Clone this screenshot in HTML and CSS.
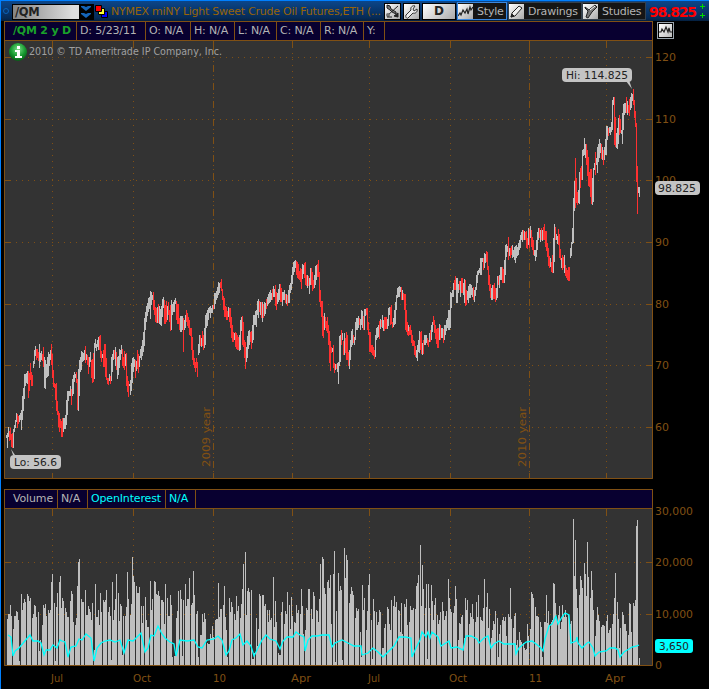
FILE: index.html
```html
<!DOCTYPE html>
<html lang="en">
<head>
<meta charset="utf-8">
<title>/QM chart</title>
<link rel="stylesheet" href="styles.css">
</head>
<body>
<main class="window">
  <header class="toolbar">
    <i class="dot"></i>
    <div class="symbol"><span>/QM</span>
      <svg class="arrows" width="14" height="14" viewBox="0 0 14 14"><path d="M2 1h3l2 1 2-1h3v1L7 6 2 2zM2 8h3l2 1 2-1h3v1l-5 4-5-4z" fill="#1464b8"/></svg>
    </div>
    <svg class="link" width="14" height="13" viewBox="0 0 14 13"><path d="M6.500 6.500h6v6h-6z" fill="#00f" stroke="#000"/><path d="M3.500 3.500h6v6h-6z" fill="#ff3" stroke="#000"/><path d="M.5 .5h6v6h-6z" fill="#f00" stroke="#000"/></svg>
    <span class="title">NYMEX miNY Light Sweet Crude Oil Futures,ETH (...</span>
    <span class="tool share"><svg width="15" height="15" viewBox="0 0 15 15"><path d="M2 1l3 1 1 3 5 3v2L7 8 5 6 2 4zM13 2L3 11" stroke="#222" fill="#777"/><circle cx="3" cy="11" r="2" fill="#777"/><path d="M9 12l4-3v4zM2 13h5" stroke="#222" fill="#222"/></svg></span>
    <span class="tool wrench"><svg width="15" height="15" viewBox="0 0 15 15"><path d="M2 11l5-5c-1-3 2-5 4-4L9 5l1 2 3-2c1 3-2 5-4 4l-5 5c-1 1-3-1-2-3z" fill="#eee" stroke="#333"/></svg></span>
    <span class="tool day">D</span>
    <span class="menu style"><svg width="15" height="15" viewBox="0 0 15 15"><path d="M0 12l2-3 1 2 2-5 2 3 2-4 1 5 2-7 1 3 2-3" stroke="#222" stroke-width="1.2" fill="none"/></svg><b>Style</b></span>
    <span class="menu draw"><svg width="15" height="15" viewBox="0 0 15 15"><path d="M2 13l1-4 7-7 3 2-7 8z" fill="#eee" stroke="#222"/><path d="M2 13l1-3 2 2z" stroke="#222" fill="#222"/></svg><b>Drawings</b></span>
    <span class="menu study"><svg width="15" height="15" viewBox="0 0 15 15"><path d="M2 3l4 3 6-5 2 2-5 5-4 6-2-1 2-6-3-3z" fill="#777" stroke="#222"/><path d="M7 6l5-4" stroke="#fff"/></svg><b>Studies</b></span>
    <strong class="last">98.825</strong>
    <span class="plus"><i></i><i></i></span>
  </header>
  <div class="status">
    <div class="cells">
      <span class="cell sym">/QM 2 y D</span><span class="cell c1">D: 5/23/11</span><span class="cell c2">O: N/A</span><span class="cell c3">H: N/A</span><span class="cell c4">L: N/A</span><span class="cell c5">C: N/A</span><span class="cell c6">R: N/A</span><span class="cell c7">Y:</span>
    </div>
    <span class="fit"><svg width="13" height="13" viewBox="0 0 13 13"><path d="M0 8h2l1-3 2 3 2-5 2 5 1-4 1 4h2" stroke="#222" stroke-width="1.2" fill="none"/></svg></span>
  </div>
  <svg class="plot" id="price" width="705" height="449" viewBox="4 41 705 449"></svg>
  <div class="studybar"><span class="cell v1">Volume</span><span class="cell v2">N/A</span><span class="cell v3">OpenInterest</span><span class="cell v4">N/A</span></div>
  <svg class="plot" id="volume" width="705" height="180" viewBox="4 509 705 180"></svg>
</main>
<script src="chart.js"></script>
</body>
</html>
```
FILE: styles.css
```css
* { box-sizing: border-box; }
body { margin: 0; background: #000; font-family: "DejaVu Sans", sans-serif; font-size: 11px; }
.window { width: 709px; height: 689px; overflow: hidden; background: #000; border-left: 1px solid #0080ff; padding-left: 3px; }
.toolbar { display: flex; align-items: center; height: 21px; margin-left: -3px; border-top: 1px solid #0080ff; background: linear-gradient(#0b468a, #062a55 85%, #04203f); white-space: nowrap; }
.dot { width: 6px; height: 6px; border: 1px solid #0b62b8; border-radius: 50%; margin: 0 3px 0 2px; flex: none; }
.symbol { display: flex; align-items: center; flex: none; width: 82px; height: 16px; margin-top: 1px; border: 1px solid #000; background: linear-gradient(90deg, #858585, #ddd 75%); color: #222; font-weight: bold; font-size: 11.5px; letter-spacing: -.4px; }
.symbol span { flex: 1; padding-left: 2px; }
.arrows { background: #000; }
.link { margin-left: 1px; flex: none; overflow: visible; }
.title { flex: none; width: 273px; margin-left: 2px; color: #986407; letter-spacing: -.25px; }
.tool { flex: none; height: 17px; border: 1px solid #000; background: linear-gradient(135deg, #fff, #aaa); }
.tool svg { display: block; }
.share, .wrench { width: 17px; }
.wrench { margin-left: 2px; }
.day { width: 34px; margin-left: 2px; text-align: center; color: #222; font-weight: bold; line-height: 15px; font-size: 12px; }
.menu { flex: none; display: flex; align-items: center; height: 18px; border: 1px solid #34404c; background: #151515; color: #b4b4b4; }
.menu svg { background: linear-gradient(135deg, #fff, #aaa); }
.menu b { font-weight: normal; margin-left: 4px; letter-spacing: -.2px; }
.style { width: 50px; margin-left: 1px; border-color: #3a87df; }
.draw { width: 74px; margin-left: 1px; }
.study { width: 64px; }
.last { color: #f00; margin-left: 3px; font-size: 14px; letter-spacing: -1.2px; width: 51px; margin-top: 1px; }
.plus { display: flex; flex-direction: column; gap: 4px; }
.plus i { width: 5px; height: 5px; background: linear-gradient(#0d0, #0d0) center/5px 1px no-repeat, linear-gradient(#0d0, #0d0) center/1px 5px no-repeat; }
.status { display: flex; height: 20px; }
.cells, .studybar { display: flex; width: 649px; height: 20px; border: 1px solid #805014; background: #080030; color: #b4b4b4; }
.cell { flex: none; border-right: 1px solid #805014; line-height: 17px; padding-left: 3px; letter-spacing: -.15px; white-space: nowrap; overflow: hidden; }
.sym { width: 72px; padding-left: 8px; color: #1aa32a; font-weight: bold; letter-spacing: -.2px; }
.c1 { width: 69px; }
.c2 { width: 45px; }
.c3 { width: 44px; }
.c4 { width: 42px; }
.c5 { width: 44px; }
.c6 { width: 43px; }
.c7 { width: 21px; }
.fit { width: 17px; height: 17px; margin: 1px 0 0 4px; padding: 1px; border: 1px solid #9aa4ac; background: #000; }
.fit svg { display: block; background: linear-gradient(135deg, #fff, #bbb); }
.plot { display: block; overflow: visible; }
.studybar { height: 20px; margin-top: -1px; position: relative; }
.v1 { width: 53px; padding-left: 8px; }
.v2 { width: 30px; }
.v3 { width: 78px; color: #0ff; }
.v4 { width: 30px; color: #0ff; }
.frame { fill: none; stroke: #805014; }
.grid { fill: none; stroke: #805014; stroke-dasharray: 1 5; }
.year { fill: none; stroke: #805014; stroke-dasharray: 7 3 1 3 1 3; }
.axis { fill: #805014; }
.tag { fill: #c4c4c4; }
.ink { fill: #222; }
.copy { fill: #a0a0a0; }
text { font-size: 11px; }
```
FILE: chart.js
```js
// Price ranges "top,bottom"; "r" marks a falling bar, "x@" pins a bar to a column.
const ranges = `6@435,438 433,448 427,437 r431,441 r428,440 r434,447 r433,448 429,448 425,432 420,428 413,422 r414,428 r416,424 415,422 413,420 410,430 396,420 388,411 374,399 374,386 373,383 371,384 r371,398 r373,391 r363,380 r372,386 r375,386 361,368 350,364 346,356 r349,360 r349,358 r352,361 344,368 353,362 351,360 r354,361 r347,367 357,388 360,389 364,378 357,377 352,376 354,366 350,360 51@r344,365 r354,378 r370,387 r383,388 r384,400 r383,411 r401,415 r411,427 r413,432 r419,428 r421,437 62@r418,437 418,432 418,429 415,429 400,425 391,415 391,401 391,396 386,396 r389,405 379,396 375,394 372,382 374,378 r372,383 77@r379,410 369,411 360,396 357,372 351,370 352,362 353,361 350,360 r346,363 354,360 r355,365 r357,374 357,367 352,362 r360,378 r359,383 r353,382 343,379 339,348 344,351 340,347 337,350 r336,350 100@r335,358 r351,362 354,358 r350,367 r344,367 r344,377 r358,380 r378,384 r378,385 374,381 r376,384 357,381 354,372 350,360 r350,359 347,366 r352,370 357,379 356,375 349,368 350,360 345,354 r349,366 r357,368 r351,370 354,366 r353,386 r376,392 128@r381,397 384,386 380,395 363,391 358,383 357,372 359,367 r360,378 361,371 r350,369 r354,373 356,367 349,358 346,360 340,356 332,352 318,346 312,330 306,322 303,316 298,312 297,309 150@291,319 292,305 295,300 r292,310 r300,315 r307,322 r308,323 307,323 r304,323 306,324 309,325 306,326 299,317 297,308 r300,324 r305,324 r301,322 306,320 r302,315 r310,322 170@r305,331 300,330 304,315 302,312 300,312 298,304 r301,320 r304,324 r304,324 r318,330 316,332 316,332 316,330 r318,352 320,330 315,328 r310,322 r313,326 r317,328 r320,335 r328,336 r328,350 r337,360 r350,365 r358,368 r362,372 r358,368 197@r362,377 344,355 335,353 r335,346 338,347 r331,346 r335,350 328,348 315,345 313,328 310,326 308,320 307,313 306,318 308,313 305,313 r305,309 293,309 293,304 291,300 287,298 282,295 283,293 r282,288 221@r279,291 r289,300 r296,310 r298,317 r306,317 r307,320 r311,320 307,317 r308,322 r308,328 r317,338 r325,342 r332,342 333,340 r332,347 r333,349 r335,350 r337,350 335,351 320,350 317,331 r316,345 r322,347 r340,358 245@r342,369 347,362 336,358 331,349 330,345 r332,342 r331,349 325,343 315,340 315,325 311,325 310,327 301,315 299,318 r301,312 302,315 r302,318 302,322 r304,318 302,316 303,314 r299,309 297,306 294,304 292,303 290,302 293,300 r289,300 286,297 289,297 r285,306 r292,310 293,304 289,302 284,300 r284,302 r288,302 292,306 292,300 290,300 r294,303 294,304 r295,306 290,303 285,303 283,293 275,290 267,284 262,275 261,272 295@260,268 r261,275 r262,278 r264,279 r271,280 r268,282 r269,289 264,279 265,274 r263,278 r262,285 r275,286 275,288 r276,286 278,294 268,285 r268,285 r272,291 r280,289 275,288 266,285 265,280 r264,277 318@r260,277 r272,302 r290,307 r301,317 r301,336 r316,338 313,330 r317,328 r321,331 r317,333 r325,345 r331,363 330@r341,371 r347,353 348,352 r345,368 r363,373 364,370 r364,369 363,372 338@362,384 336,366 335,362 r330,345 333,340 r341,355 333,355 r338,353 r332,360 r335,360 r352,366 349@350,369 340,360 331,347 329,345 r335,343 337,345 322,340 318,330 316,328 r318,325 319,330 310,325 311,328 r316,330 309,330 309,316 366@r308,315 r308,330 r322,335 r332,352 r345,353 r345,355 r347,356 374@r350,359 335,357 328,340 327,338 325,337 r321,339 319,329 r320,327 315,328 320,331 r317,331 r317,329 319,329 308,326 307,315 r307,325 r305,324 r322,328 318,327 310,325 302,324 295,310 288,298 287,297 399@286,297 287,292 r287,300 290,300 r293,300 r294,310 r294,330 r310,332 r322,335 r331,336 325,336 r327,335 r325,335 r330,343 r335,346 r340,346 r341,355 r346,357 350,358 417@345,361 340,352 331,353 r332,350 r331,354 343,355 r340,354 335,345 335,343 r338,345 r340,347 333,342 r330,342 325,340 322,332 433@r316,325 r320,333 r325,339 r329,344 r328,348 324,340 r325,340 328,338 328,338 r329,343 325,340 325,335 320,331 318,328 310,330 292,328 293,308 290,297 283,297 r280,290 455@r276,290 278,303 284,293 r281,290 281,297 r278,293 283,295 279,303 465@r280,306 r290,305 291,300 286,303 284,298 285,295 288,297 r287,300 290,302 287,296 275,290 271,283 270,275 268,273 258,275 258,262 r258,270 253,268 254,263 486@r251,262 r252,270 r266,285 r275,291 r284,298 288,300 285,300 r285,299 r283,299 495@r288,302 288,300 276,298 r276,285 275,288 267,280 r267,283 r269,283 260,283 245,275 244,257 246,252 508@r237,260 248,256 r248,258 r246,255 245,258 250,257 247,260 515@246,263 245,258 247,256 243,255 240,250 235,248 232,240 230,242 r230,240 231,240 r232,240 r231,248 r238,249 228,245 r229,248 226,238 r230,247 r237,250 r240,255 534@250,256 250,261 240,257 232,250 228,240 r228,238 230,242 r228,240 230,241 r227,240 r224,240 r231,247 r231,251 r243,257 r248,266 r256,268 258,267 r262,272 r255,273 553@238,273 224,262 r227,240 234,240 236,244 r229,245 r234,258 r249,260 258,268 r255,270 r257,268 255,273 r265,276 r268,278 r270,280 568@r267,281 r267,281 248,258 242,256 228,244 573@198,243 181,211 575@r158,208 r178,203 r192,205 190,203 172,204 r168,188 r166,180 150,180 149,156 138,155 144,158 r144,165 r150,176 r157,186 r172,187 r169,197 r169,204 592@178,205 168,202 163,170 r152,175 158,165 147,173 144,162 139,158 143,153 r144,159 147,160 r150,165 147,160 139,155 126,155 126,140 r128,136 127,133 127,135 122,132 100,130 97,105 614@r97,145 r117,147 133,148 128,149 118,144 r115,135 r119,133 130,134 113,144 104,130 103,115 103,113 r97,113 101,115 r105,113 r99,116 97,110 93,108 94,101 633@r89,105 r100,118 r111,127 636@r123,182 637@r166,214 638@187,193 187,197`;

// Bar tops by column, "x:top".
const volumes = `7:619 8:614 10:605 11:616 13:629 14:616 16:611 17:612 18:620 19:661 21:594 22:610 23:603 24:599 25:602 27:594 28:596 29:601 30:598 32:618 33:614 34:605 35:606 36:617 38:612 39:651 40:640 43:605 44:608 45:604 46:616 48:610 49:613 50:610 51:582 52:574 54:603 55:661 56:607 57:593 59:582 60:576 61:608 62:598 63:601 65:608 66:612 68:617 70:601 71:591 72:594 73:622 76:618 77:586 78:562 79:559 81:599 82:602 83:602 85:590 87:615 88:606 89:609 90:612 91:620 92:603 94:650 95:584 97:617 98:610 99:625 100:593 101:612 103:600 104:602 105:600 106:590 108:612 109:607 110:616 111:660 112:582 113:620 114:610 115:599 116:574 118:593 119:621 120:604 121:606 122:655 123:616 125:616 126:607 127:572 128:599 130:615 131:604 132:557 133:576 134:582 136:586 138:593 139:587 141:606 142:623 143:606 145:597 146:620 148:627 150:581 151:610 152:599 154:581 155:582 156:594 157:595 158:591 159:596 161:600 162:600 163:602 164:624 165:584 167:598 169:616 170:595 171:605 172:657 175:656 176:618 177:611 178:591 180:590 181:599 182:656 183:600 185:584 186:606 187:599 188:599 189:578 191:605 192:603 193:571 194:595 196:614 197:611 198:657 200:635 202:614 203:622 204:613 205:619 207:643 208:644 210:634 211:638 212:626 213:637 215:620 216:619 218:583 219:617 220:609 221:609 223:605 224:586 225:617 226:630 227:657 229:598 230:612 231:602 232:607 234:614 235:620 236:596 237:611 238:606 240:618 241:604 242:589 243:564 245:552 246:615 247:591 248:588 249:592 251:590 252:659 254:653 256:618 257:646 258:629 259:594 260:596 262:595 263:595 264:606 265:604 267:610 268:622 269:610 270:620 271:618 273:577 274:627 275:601 276:622 278:653 279:655 281:612 282:602 284:624 285:611 286:614 287:592 289:605 290:629 291:597 292:616 294:622 295:623 296:605 297:613 298:610 300:614 301:589 302:606 303:634 305:630 306:608 307:610 308:589 309:589 311:609 312:619 313:592 314:596 316:610 317:611 318:622 319:599 320:564 322:557 323:559 324:588 325:594 327:582 328:580 329:588 330:575 331:624 333:574 334:551 335:662 336:611 338:573 339:591 340:586 341:590 342:660 344:548 345:578 346:555 347:560 349:603 350:594 351:587 352:591 353:595 355:618 356:608 357:611 358:609 360:632 361:657 362:585 363:610 364:598 366:630 367:611 368:585 369:574 371:620 372:659 373:599 374:611 376:612 377:625 378:622 379:610 380:612 382:648 384:628 385:624 387:607 388:609 389:624 390:630 391:600 393:606 394:596 395:607 396:602 398:610 399:611 400:632 401:603 402:634 404:604 405:607 406:599 407:625 409:622 410:606 412:610 413:608 415:609 416:586 417:583 418:575 420:545 421:606 422:565 423:589 425:608 426:584 427:659 428:584 429:608 431:585 432:601 433:620 434:605 435:598 437:615 438:624 439:620 440:612 442:602 443:611 444:620 445:616 446:611 448:579 449:598 450:609 451:612 453:613 454:606 455:586 456:599 458:640 459:623 460:624 461:617 462:615 464:638 465:598 466:610 467:600 469:624 470:613 471:617 472:604 473:619 475:622 476:602 477:617 478:595 480:617 481:620 482:621 483:608 484:579 486:607 487:593 488:628 489:609 491:638 492:630 493:621 494:624 495:611 497:618 498:657 499:634 500:625 502:620 503:617 504:621 505:617 506:636 508:614 509:617 510:588 511:619 513:628 514:616 515:613 516:645 517:640 519:632 520:640 521:642 523:643 524:648 525:650 526:649 527:624 528:636 530:629 531:592 532:594 533:598 535:607 536:616 537:616 538:617 540:622 541:627 542:657 544:622 546:595 547:623 548:611 549:625 551:622 552:620 553:583 554:584 555:603 556:618 558:615 559:606 560:629 561:622 562:605 563:616 564:617 565:610 566:617 568:615 569:624 571:621 573:519 574:576 575:540 576:589 577:608 579:595 580:576 581:580 582:588 584:563 585:574 586:596 587:542 588:577 590:598 591:571 592:590 593:610 595:636 596:620 597:607 598:615 599:621 601:627 602:625 603:625 604:626 606:621 607:615 608:633 609:630 610:628 612:624 613:614 614:598 615:573 617:602 618:619 619:648 620:628 622:612 623:615 624:624 625:624 626:631 628:635 629:603 630:604 631:632 633:603 634:606 635:600 636:526 637:520 639:658`;

const interest = `8,635 11,637 13,656 15,651 19,648 24,642 30,635 33,641 38,641 41,643 44,655 46,650 50,650 53,645 57,648 60,640 62,641 65,642 68,657 71,647 76,646 79,639 82,640 86,634 91,638 94,661 97,648 101,643 105,641 110,640 115,642 120,640 124,653 128,640 133,641 137,637 141,633 145,652 148,648 151,635 154,636 158,626 162,634 165,638 170,642 174,644 176,656 180,640 187,641 194,640 198,647 202,648 207,640 214,639 218,636 222,640 226,655 229,651 232,640 236,638 240,634 243,645 247,641 251,646 254,656 258,648 262,640 266,635 270,639 276,641 280,649 283,641 287,637 293,637 296,632 300,635 304,637 305,651 308,640 312,636 317,636 322,635 329,635 332,647 335,643 342,640 346,642 354,646 361,646 362,655 368,653 373,648 378,652 383,657 388,652 394,646 399,637 405,637 411,638 412,657 416,648 420,640 422,632 426,637 428,632 430,638 432,632 438,637 441,646 449,641 451,648 457,647 463,650 466,636 471,636 477,639 479,643 484,638 488,636 491,648 494,644 499,641 504,644 510,644 515,644 516,654 519,648 526,642 532,641 536,644 540,647 543,651 545,639 549,626 552,624 556,616 558,624 562,617 565,613 569,615 571,643 576,641 577,637 578,643 582,648 587,643 589,642 591,645 593,648 595,656 599,652 606,651 610,648 615,648 618,650 620,657 624,652 629,649 632,647 637,646 639,645`;

const label = (x, y, text, cls, width) => `<text x="${x}" y="${y}" class="${cls}" textLength="${width}" lengthAdjust="spacingAndGlyphs">${text}</text>`;
const months = [52, 133, 213, 292, 369, 450, 529, 606];

function grid(rows, top, bottom, yearLines) {
  let out = `<path class="frame" d="M4.5 ${top}V${bottom + .5}H652.5V${top}"/>`;
  for (const y of rows) {
    out += `<path class="grid" d="M10 ${y + .5}H647"/><path class="frame" d="M5 ${y + .5}h6M647 ${y + .5}h6"/>`;
  }
  months.forEach((x, i) => {
    const cls = yearLines && (i === 2 || i === 6) ? 'year' : 'grid';
    out += `<path class="${cls}" d="M${x + .5} ${top + 6}V${bottom}"/><path class="frame" d="M${x + .5} ${top}v6"/>`;
    if (yearLines) out += `<path class="frame" d="M${x + .5} ${bottom}v-5"/>`;
  });
  return out;
}

let price = '<rect x="4" y="41" width="649" height="438" fill="#333"/>' + grid([57, 119, 180, 242, 304, 365, 427], 41, 478, true);
price += `<g transform="translate(210 467) rotate(-90)">${label(0, 0, '2009 year', 'axis', 60)}</g><g transform="translate(526 467) rotate(-90)">${label(0, 0, '2010 year', 'axis', 60)}</g>`;

const bars = ranges.split(' ').map(item => {
  const [, pin, fall, top, bottom] = item.match(/^(?:(\d+)@)?(r?)(\d+),(\d+)$/);
  return { x: pin ? +pin : null, falling: fall === 'r', top: +top, bottom: +bottom };
});
bars[bars.length - 1].x = 639;
let pinned = 0;
for (let i = 1; i < bars.length; i++) {
  if (bars[i].x === null) continue;
  const from = bars[pinned].x, step = (bars[i].x - from) / (i - pinned);
  for (let j = pinned + 1; j < i; j++) bars[j].x = from + step * (j - pinned);
  pinned = i;
}
let grey = '', red = '';
bars.forEach((bar, i) => {
  const x = Math.round(bar.x);
  const next = i + 1 < bars.length ? Math.round(bars[i + 1].x) : x + 1;
  const d = `M${x} ${bar.top}h${Math.max(1, next - x)}V${bar.bottom}H${x}z`;
  if (bar.falling) red += d; else grey += d;
});
price += `<path d="${grey}" fill="#bfbfbf"/><path d="${red}" fill="#ff3030"/>`;
[[57, '120'], [119, '110'], [180, '100'], [242, '90'], [304, '80'], [365, '70'], [427, '60']].forEach(([y, t]) => { price += label(655, y + 4, t, 'axis', t.length * 7); });
price += '<path class="tag" d="M15 455l-4-6 2 6zM626 81l6 8-3-9z"/><rect class="tag" x="10" y="455" width="51" height="14" rx="4"/><rect class="tag" x="562" y="68" width="70" height="14" rx="4"/><rect class="tag" x="655" y="181" width="45" height="14" rx="4"/>';
price += label(14, 466, 'Lo: 56.6', 'ink', 43) + label(566, 79, 'Hi: 114.825', 'ink', 62) + label(658, 192, '98.825', 'ink', 38);
price += '<defs><radialGradient id="orb" cx=".5" cy=".35" r=".65"><stop offset="0" stop-color="#7de08a"/><stop offset=".6" stop-color="#179a30"/><stop offset="1" stop-color="#075c16"/></radialGradient></defs><circle cx="18" cy="52" r="9" fill="url(#orb)"/><path d="M17 46h3v3h-3zM15 50h5v6h2v2h-7v-2h2v-4h-2z" fill="#fff"/>';
price += label(29, 55, '2010 © TD Ameritrade IP Company, Inc.', 'copy', 193);
document.getElementById('price').innerHTML = price;

// Days without a pinned top take the lower neighbour, leaving a gap every fifth column.
const tops = new Map(volumes.split(' ').map(v => v.split(':').map(Number)));
let columns = '', run = 0;
for (let x = 7; x < 640; x++) {
  let top = tops.get(x);
  if (top === undefined && run < 4 && x < 638) {
    top = Math.max(tops.get(x - 1) || 625, tops.get(x + 1) || 625);
  }
  if (top === undefined || (!tops.has(x) && run >= 3)) { run = 0; continue; }
  run++;
  columns += `M${x} ${top}h1V665h-1z`;
}
let volume = '<rect x="4" y="509" width="649" height="157" fill="#333"/>' + grid([562, 614], 509, 665, false);
volume += `<path fill="#bfbfbf" d="${columns}"/>`;
volume += `<polyline points="${interest}" fill="none" stroke="#0ff" stroke-width="1.3"/>`;
volume += label(655, 515, '30,000', 'axis', 38) + label(655, 566, '20,000', 'axis', 38) + label(655, 618, '10,000', 'axis', 38) + label(655, 669, '0', 'axis', 7);
[[51, 'Jul', 12], [133, 'Oct', 18], [213, '10', 13], [291, 'Apr', 20], [368, 'Jul', 12], [449, 'Oct', 18], [529, '11', 13], [605, 'Apr', 20]].forEach(([x, t, w]) => { volume += label(x, 682, t, 'axis', w); });
volume += '<rect x="655" y="639" width="38" height="14" rx="3" fill="#0ff"/>' + label(659, 650, '3,650', 'ink', 30);
document.getElementById('volume').innerHTML = volume;
```
